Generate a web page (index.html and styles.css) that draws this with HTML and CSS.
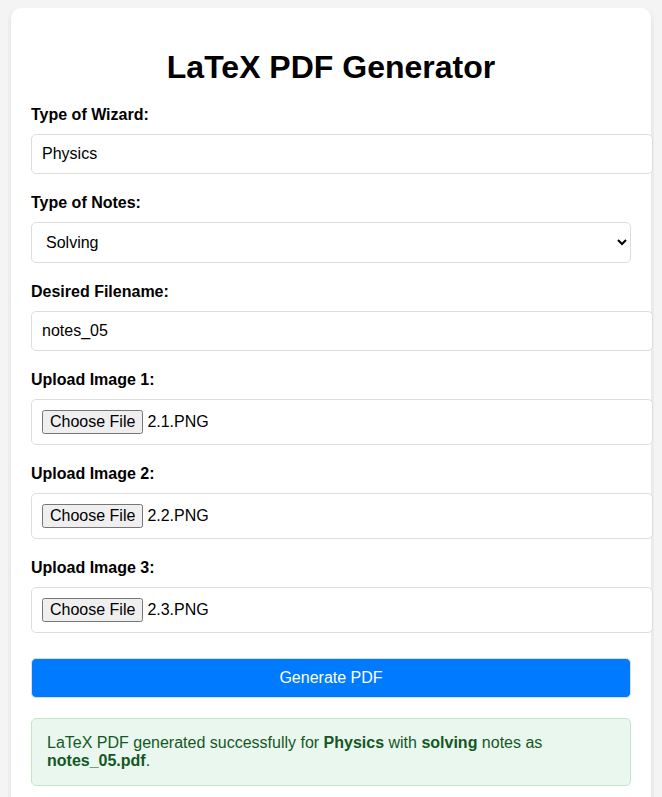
FILE: index.html
```html
<!DOCTYPE html>
<html lang="en">
<head>
  <meta charset="utf-8">
  <meta name="viewport" content="width=device-width, initial-scale=1">
  <title>LaTeX PDF Generator</title>
  <link rel="stylesheet" href="styles.css">
</head>
<body>
  <main class="container">
    <h1 class="title">LaTeX PDF Generator</h1>
    <form class="form">
      <div class="field">
        <label for="wizard">Type of Wizard:</label>
        <input class="control" type="text" id="wizard" name="wizard" value="Physics">
      </div>
      <div class="field">
        <label for="notes">Type of Notes:</label>
        <select class="control control-select" id="notes" name="notes">
          <option value="solving" selected>Solving</option>
        </select>
      </div>
      <div class="field">
        <label for="filename">Desired Filename:</label>
        <input class="control" type="text" id="filename" name="filename" value="notes_05">
      </div>
      <div class="field">
        <label for="image1">Upload Image 1:</label>
        <input class="control" type="file" id="image1" name="image1" data-file="2.1.PNG">
      </div>
      <div class="field">
        <label for="image2">Upload Image 2:</label>
        <input class="control" type="file" id="image2" name="image2" data-file="2.2.PNG">
      </div>
      <div class="field">
        <label for="image3">Upload Image 3:</label>
        <input class="control" type="file" id="image3" name="image3" data-file="2.3.PNG">
      </div>
      <button class="submit" type="submit">Generate PDF</button>
    </form>
    <div class="message" role="status">LaTeX PDF generated successfully for <strong>Physics</strong> with <strong>solving</strong> notes as <strong>notes_05.pdf</strong>.</div>
  </main>
  <script src="script.js"></script>
</body>
</html>
```

FILE: styles.css
```css
body {
  margin: 8px;
  background: #f4f4f4;
  color: #000;
  font: 16px/18px "Liberation Sans", Arial, sans-serif;
}

.container {
  max-width: 600px;
  margin: 0 auto;
  padding: 20px;
  background: #fff;
  border-radius: 10px;
  box-shadow: 0 4px 8px rgba(0, 0, 0, 0.1);
}

.title {
  margin: 20px 0;
  font-size: 32px;
  line-height: 38px;
  text-align: center;
}

.field {
  margin-bottom: 20px;
}

.field label {
  display: block;
  margin-bottom: 10px;
  font-weight: bold;
}

/* Text and file inputs keep the content box, so they run past the column. */
.control {
  display: block;
  box-sizing: content-box;
  width: 100%;
  margin: 0;
  padding: 10px;
  border: 1px solid #ddd;
  border-radius: 5px;
  background: #fff;
  color: #000;
  font: inherit;
}

.control-select {
  box-sizing: border-box;
  height: 41px;
}

.submit {
  display: block;
  width: 100%;
  margin: 25px 0 20px;
  padding: 10px;
  border: 1px solid #ddd;
  border-radius: 5px;
  background: #007bff;
  color: #fff;
  font: inherit;
  cursor: pointer;
}

.message {
  padding: 15px;
  border: 1px solid #c3e6cb;
  border-radius: 5px;
  background: #e9f7ef;
  color: #155724;
}
```

FILE: script.js
```js
document.querySelectorAll('input[data-file]').forEach((input) => {
  const transfer = new DataTransfer();
  transfer.items.add(new File([''], input.dataset.file, { type: 'image/png' }));
  input.files = transfer.files;
});
```
